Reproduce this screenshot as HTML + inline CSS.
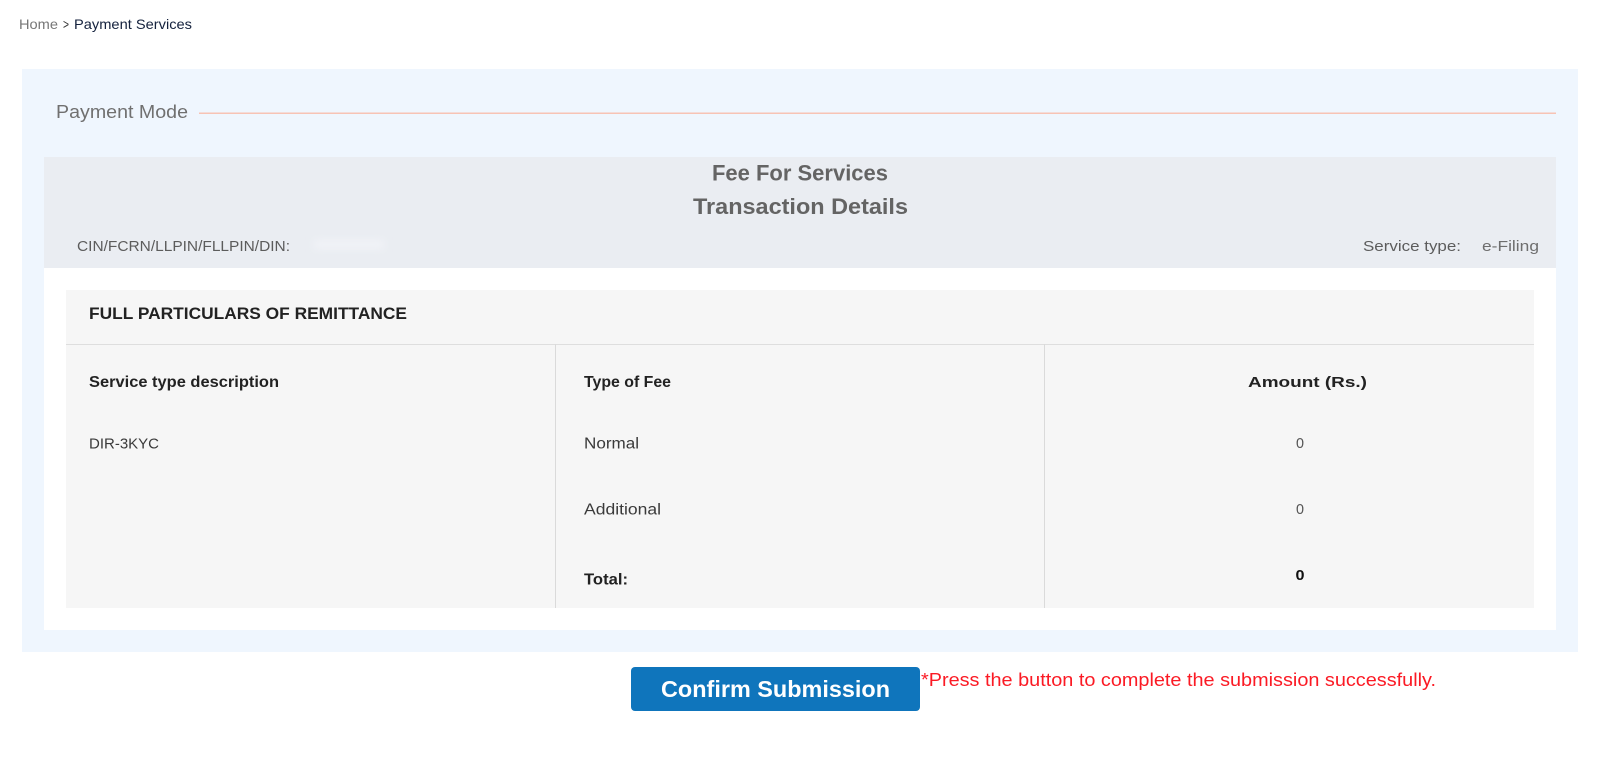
<!DOCTYPE html>
<html lang="en">
<head>
<meta charset="utf-8">
<title>Payment Services</title>
<style>
html,body{margin:0;padding:0;background:#fff;width:1600px;height:758px;overflow:hidden}
svg{display:block}
text{font-family:"Liberation Sans",Arial,sans-serif;white-space:pre}
.b{font-weight:700}
</style>
</head>
<body>
<svg width="1600" height="758" viewBox="0 0 1600 758" xmlns="http://www.w3.org/2000/svg">
<defs><filter id="bl" x="-20%" y="-60%" width="140%" height="220%"><feGaussianBlur stdDeviation="4"/></filter></defs>
<rect x="22" y="69" width="1556" height="583" fill="#eff6fe"/>
<rect x="44" y="157" width="1512" height="473" fill="#fff"/>
<rect x="44" y="157" width="1512" height="111" fill="#eaedf2"/>
<rect x="66" y="290" width="1468" height="318" fill="#f6f6f6"/>
<rect x="66" y="344" width="1468" height="1" fill="#dedede"/>
<rect x="555" y="344" width="1" height="264" fill="#dadada"/>
<rect x="1044" y="344" width="1" height="264" fill="#dadada"/>
<rect x="199" y="112.500" width="1357" height="1.500" fill="#f7c3b4"/>
<rect x="314" y="240" width="70" height="9" fill="#f1f3f7" filter="url(#bl)"/>
<rect x="631" y="667" width="289" height="44" rx="4" fill="#0f75bc"/>

<text x="19" y="29" font-size="14" fill="#777" textLength="39" lengthAdjust="spacingAndGlyphs">Home</text>
<text x="63" y="29" font-size="14" fill="#333" textLength="6" lengthAdjust="spacingAndGlyphs">&gt;</text>
<text x="74" y="29" font-size="14" fill="#14213d" textLength="118" lengthAdjust="spacingAndGlyphs">Payment Services</text>
<text x="56" y="118" font-size="18.500" fill="#707070" textLength="132" lengthAdjust="spacingAndGlyphs">Payment Mode</text>

<text class="b" x="712" y="180.500" font-size="22" fill="#646464" textLength="176" lengthAdjust="spacingAndGlyphs">Fee For Services</text>
<text class="b" x="693" y="214" font-size="22" fill="#646464" textLength="215" lengthAdjust="spacingAndGlyphs">Transaction Details</text>
<text x="77" y="251" font-size="15" fill="#5c5c5c" textLength="213" lengthAdjust="spacingAndGlyphs">CIN/FCRN/LLPIN/FLLPIN/DIN:</text>
<text x="1363" y="251" font-size="15" fill="#5c5c5c" textLength="98" lengthAdjust="spacingAndGlyphs">Service type:</text>
<text x="1482" y="251" font-size="15" fill="#6e6e6e" textLength="57" lengthAdjust="spacingAndGlyphs">e-Filing</text>

<text class="b" x="89" y="319" font-size="16.500" fill="#222" textLength="318" lengthAdjust="spacingAndGlyphs">FULL PARTICULARS OF REMITTANCE</text>
<text class="b" x="89" y="387" font-size="15.500" fill="#222" textLength="190" lengthAdjust="spacingAndGlyphs">Service type description</text>
<text class="b" x="584" y="387" font-size="15.500" fill="#222" textLength="87" lengthAdjust="spacingAndGlyphs">Type of Fee</text>
<text class="b" x="1248" y="387" font-size="15" fill="#222" textLength="119" lengthAdjust="spacingAndGlyphs">Amount (Rs.)</text>
<text x="89" y="448.500" font-size="15" fill="#3a3a3a" textLength="70" lengthAdjust="spacingAndGlyphs">DIR-3KYC</text>
<text x="584" y="448.500" font-size="15.500" fill="#3a3a3a" textLength="55" lengthAdjust="spacingAndGlyphs">Normal</text>
<text x="584" y="514.500" font-size="15.500" fill="#3a3a3a" textLength="77" lengthAdjust="spacingAndGlyphs">Additional</text>
<text class="b" x="584" y="584.500" font-size="15.500" fill="#222" textLength="44" lengthAdjust="spacingAndGlyphs">Total:</text>
<text x="1296" y="448" font-size="15" fill="#555" textLength="8" lengthAdjust="spacingAndGlyphs">0</text>
<text x="1296" y="514" font-size="15" fill="#555" textLength="8" lengthAdjust="spacingAndGlyphs">0</text>
<text class="b" x="1295.500" y="580" font-size="15" fill="#111" textLength="9" lengthAdjust="spacingAndGlyphs">0</text>

<text class="b" x="661" y="697" font-size="23" fill="#fff" textLength="229" lengthAdjust="spacingAndGlyphs">Confirm Submission</text>
<text x="921" y="686" font-size="18" fill="#fb1a24" textLength="515" lengthAdjust="spacingAndGlyphs">*Press the button to complete the submission successfully.</text>
</svg>
</body>
</html>
